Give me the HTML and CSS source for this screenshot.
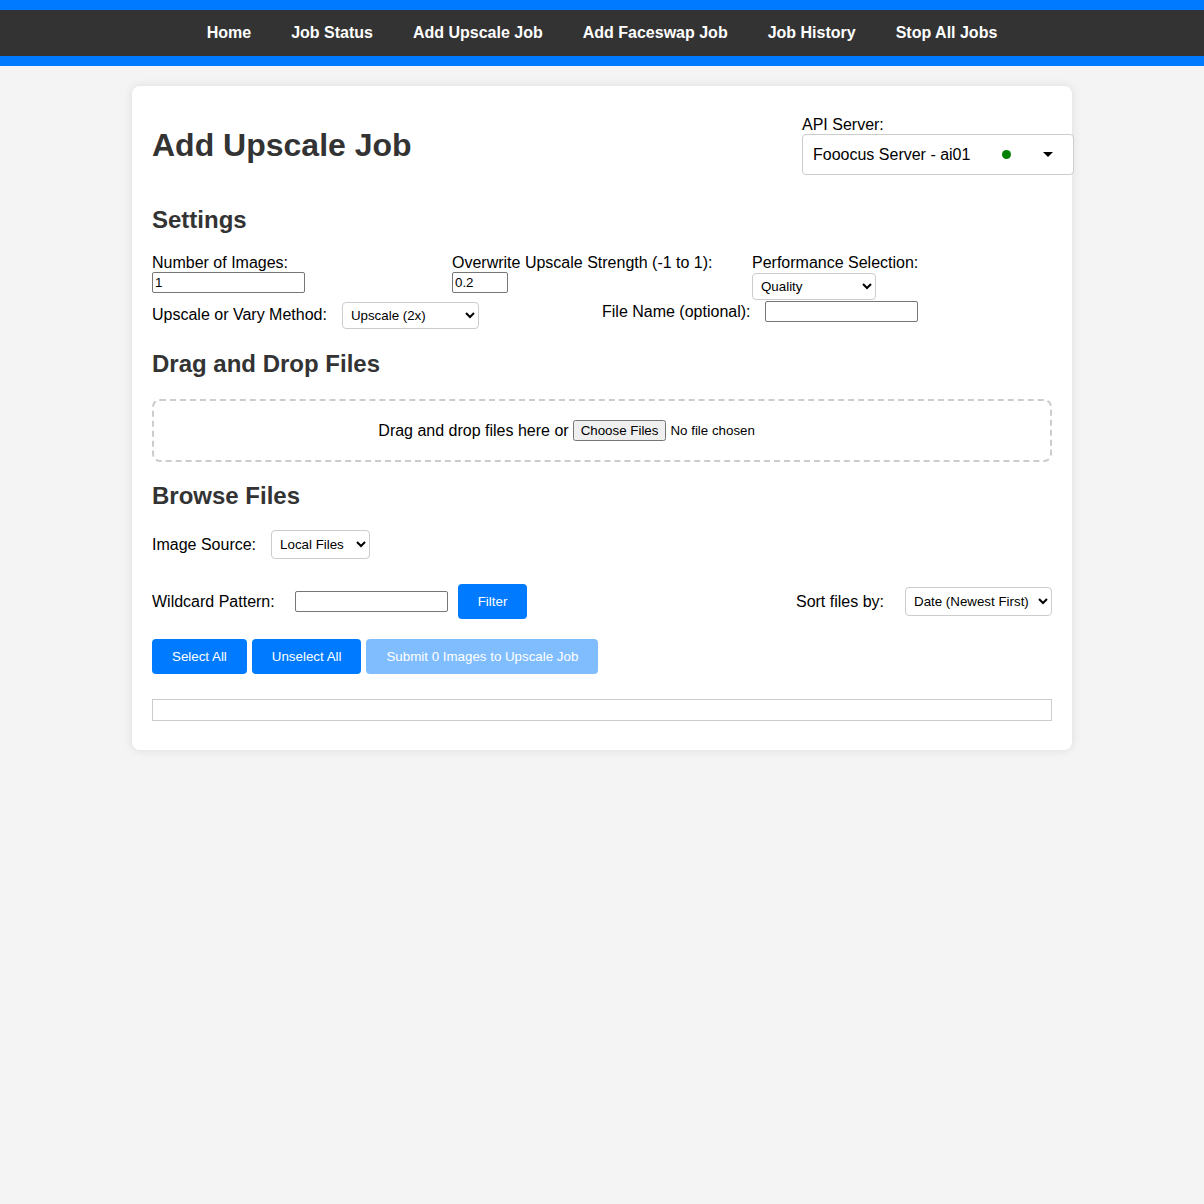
FILE: index.html
```html
<!DOCTYPE html>
<html lang="en">
<head>
<meta charset="utf-8">
<title>Add Upscale Job</title>
<link rel="stylesheet" href="styles.css">
</head>
<body>
<nav class="topnav">
  <a href="#">Home</a>
  <a href="#">Job Status</a>
  <a href="#">Add Upscale Job</a>
  <a href="#">Add Faceswap Job</a>
  <a href="#">Job History</a>
  <a href="#">Stop All Jobs</a>
</nav>

<main class="card">
  <div class="header-row">
    <h1>Add Upscale Job</h1>
    <div class="api-block">
      <div class="api-label">API Server:</div>
      <div class="api-select">
        <span class="api-name">Fooocus Server - ai01</span>
        <span class="dot"></span>
        <span class="caret"></span>
      </div>
    </div>
  </div>

  <h2 class="settings-title">Settings</h2>
  <div class="settings-grid">
    <div class="field">
      <label class="blk">Number of Images:</label>
      <input type="text" value="1">
    </div>
    <div class="field">
      <label class="blk">Overwrite Upscale Strength (-1 to 1):</label>
      <input type="text" class="short" value="0.2">
    </div>
    <div class="field">
      <label class="blk">Performance Selection:</label>
      <select class="sel perf"><option>Quality</option><option>Speed</option></select>
    </div>
  </div>
  <div class="settings-row2">
    <div class="inline-field">
      <label>Upscale or Vary Method:</label>
      <select class="sel method"><option>Upscale (2x)</option><option>Upscale (1.5x)</option></select>
    </div>
    <div class="inline-field tight">
      <label>File Name (optional):</label>
      <input type="text">
    </div>
  </div>

  <h2 class="dz-title">Drag and Drop Files</h2>
  <div class="dropzone">
    <span>Drag and drop files here or</span>
    <input type="file" multiple>
  </div>

  <h2>Browse Files</h2>
  <div class="source-row">
    <label>Image Source:</label>
    <select class="sel src"><option>Local Files</option></select>
  </div>

  <div class="filter-row">
    <div class="filter-left">
      <label>Wildcard Pattern:</label>
      <input type="text" class="wild">
      <button class="btn">Filter</button>
    </div>
    <div class="filter-right">
      <label>Sort files by:</label>
      <select class="sel sort"><option>Date (Newest First)</option></select>
    </div>
  </div>

  <div class="btn-row">
    <button class="btn">Select All</button>
    <button class="btn">Unselect All</button>
    <button class="btn" disabled>Submit 0 Images to Upscale Job</button>
  </div>

  <div class="file-list"></div>
</main>
</body>
</html>
```

FILE: styles.css
```css
body {
  margin: 0;
  background: #f4f4f4;
  font-family: "Liberation Sans", Arial, Helvetica, sans-serif;
  font-size: 16px;
  color: #000;
}

.topnav {
  background: #333;
  border-top: 10px solid #007bff;
  border-bottom: 10px solid #007bff;
  display: flex;
  justify-content: center;
}

.topnav a {
  color: #fff;
  text-decoration: none;
  font-weight: bold;
  font-size: 16px;
  line-height: 18px;
  padding: 14px 20px;
}

.card {
  display: block;
  width: 900px;
  margin: 20px auto;
  padding: 20px;
  background: #fff;
  border-radius: 8px;
  box-shadow: 0 0 10px rgba(0, 0, 0, 0.1);
}

h1, h2 {
  color: #333;
}

h1 {
  font-size: 32px;
  margin: 21px 0;
  line-height: 37px;
}

h2 {
  font-size: 24px;
  margin: 20px 0;
  line-height: 28px;
}

h2.settings-title {
  margin-top: 21px;
}

h2.dz-title {
  margin-bottom: 21px;
}

.header-row {
  display: flex;
  justify-content: space-between;
  align-items: center;
}

.api-block {
  width: 250px;
}

.api-label {
  line-height: 18px;
}

.api-select {
  width: 100%;
  padding: 10px;
  border: 1px solid #ccc;
  border-radius: 4px;
  display: flex;
  align-items: center;
  line-height: 19px;
  background: #fff;
}

.api-name {
  color: #000;
}

.dot {
  width: 9px;
  height: 9px;
  border-radius: 50%;
  background: #008000;
  margin-left: 32px;
}

.caret {
  width: 0;
  height: 0;
  border-left: 5px solid transparent;
  border-right: 5px solid transparent;
  border-top: 5px solid #000;
  margin-left: 32px;
}

input[type="text"] {
  font-family: "Liberation Sans", Arial, sans-serif;
  font-size: 13.33px;
  border: 1px solid #767676;
  border-radius: 2px;
  padding: 1px 2px;
  width: 147px;
  height: 17px;
  margin: 0;
}

input.short {
  width: 50px;
}

input.wild {
  width: 147px;
}

label {
  line-height: 18px;
}

label.blk {
  display: block;
}

.settings-grid {
  display: grid;
  grid-template-columns: repeat(3, 1fr);
}

.settings-row2 {
  display: grid;
  grid-template-columns: 1fr 1fr;
  align-items: start;
  margin-top: 1px;
  padding-bottom: 1px;
}

.inline-field {
  display: flex;
  align-items: center;
  gap: 15px;
}

.inline-field.tight {
  gap: 14px;
}

.sel {
  font-family: "Liberation Sans", Arial, sans-serif;
  font-size: 13.33px;
  border: 1px solid #ccc;
  border-radius: 4px;
  background: #fff;
  color: #000;
  padding: 0 4px;
  margin: 0;
}

.perf { width: 124px; height: 27px; margin-top: 1px; }
.method { width: 137px; height: 27px; margin-top: 1px; }
.src { width: 99px; height: 29px; }
.sort { width: 147px; height: 29px; }

.dropzone {
  border: 2px dashed #ccc;
  border-radius: 8px;
  padding: 20px;
  height: 19px;
  display: flex;
  justify-content: center;
  align-items: center;
  gap: 4px;
}

.dropzone input[type="file"] {
  font-family: "Liberation Sans", Arial, sans-serif;
  font-size: 13.33px;
}

.source-row {
  display: flex;
  align-items: center;
  gap: 15px;
  margin-bottom: 25px;
}

.filter-row {
  display: flex;
  justify-content: space-between;
  align-items: center;
  margin-bottom: 20px;
}

.filter-left {
  display: flex;
  align-items: center;
}

.filter-left input {
  margin-left: 20px;
}

.filter-left .btn {
  margin-left: 10px;
}

.filter-right {
  display: flex;
  align-items: center;
  gap: 21px;
}

.btn {
  font-family: "Liberation Sans", Arial, sans-serif;
  font-size: 13.33px;
  line-height: 15px;
  padding: 10px 20px;
  background: #007bff;
  color: #fff;
  border: none;
  border-radius: 4px;
  cursor: pointer;
}

.btn:disabled {
  background: #80bdff;
  cursor: default;
}

.btn-row {
  display: flex;
  gap: 5px;
  margin-bottom: 25px;
}

.file-list {
  height: 20px;
  border: 1px solid #ccc;
  margin-bottom: 9px;
}
```
